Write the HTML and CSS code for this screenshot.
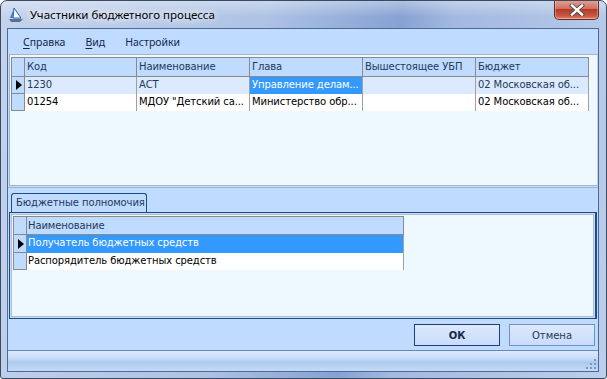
FILE: index.html
```html
<!DOCTYPE html>
<html lang="ru">
<head>
    <meta charset="UTF-8">
    <title>Участники бюджетного процесса</title>
    <link rel="stylesheet" href="styles.css">
</head>
<body>
    <div class="window">
        <div class="titlebar">
            <svg class="app-icon" width="16" height="16" viewBox="0 0 16 16">
                <path d="M6 1 L13 11 L5 11 Z" fill="#ffffff" stroke="#2a5fb0" stroke-width="1"/>
                <path d="M6 1 L5 11 L2 11 Z" fill="#3b7bd8"/>
                <path d="M1 12 L15 12 L12 15 L3 15 Z" fill="#5a6f8f"/>
            </svg>
            <span class="title">Участники бюджетного процесса</span>
            <div class="close-btn">
                <svg width="16" height="12" viewBox="0 0 16 12">
                    <path d="M3 1.5 L13 10.5 M13 1.5 L3 10.5" stroke="#4a4a4a" stroke-width="4.2" stroke-linecap="square"/>
                    <path d="M3 1.5 L13 10.5 M13 1.5 L3 10.5" stroke="#ffffff" stroke-width="2.4" stroke-linecap="square"/>
                </svg>
            </div>
        </div>

        <div class="client">
            <div class="menubar">
                <span class="menu-item"><u>С</u>правка</span>
                <span class="menu-item"><u>В</u>ид</span>
                <span class="menu-item">Настройки</span>
            </div>

            <!-- participants grid -->
            <div class="grid main-grid">
                <div class="row header">
                    <div class="cell ind"></div>
                    <div class="cell">Код</div>
                    <div class="cell">Наименование</div>
                    <div class="cell">Глава</div>
                    <div class="cell">Вышестоящее УБП</div>
                    <div class="cell">Бюджет</div>
                </div>
                <div class="row current">
                    <div class="cell ind"><span class="arrow"></span></div>
                    <div class="cell">1230</div>
                    <div class="cell">АСТ</div>
                    <div class="cell focused">Управление делам...</div>
                    <div class="cell"></div>
                    <div class="cell">02 Московская об...</div>
                </div>
                <div class="row">
                    <div class="cell ind"></div>
                    <div class="cell">01254</div>
                    <div class="cell">МДОУ "Детский са...</div>
                    <div class="cell">Министерство обр...</div>
                    <div class="cell"></div>
                    <div class="cell">02 Московская об...</div>
                </div>
            </div>

            <div class="splitter"></div>

            <div class="tabs">
                <div class="tab-strip">
                    <div class="tab">Бюджетные полномочия</div>
                </div>
                <div class="tab-panel">
                    <div class="panel-inner">
                        <div class="grid sub-grid">
                            <div class="row header">
                                <div class="cell ind"></div>
                                <div class="cell">Наименование</div>
                            </div>
                            <div class="row selected">
                                <div class="cell ind"><span class="arrow"></span></div>
                                <div class="cell">Получатель бюджетных средств</div>
                            </div>
                            <div class="row">
                                <div class="cell ind"></div>
                                <div class="cell">Распорядитель бюджетных средств</div>
                            </div>
                        </div>
                    </div>
                </div>
            </div>

            <div class="buttons">
                <button class="btn default">ОК</button>
                <button class="btn">Отмена</button>
            </div>

            <div class="statusbar">
                <svg class="grip" width="10" height="10" viewBox="0 0 10 10">
                    <rect x="8" y="0" width="2" height="2" fill="#7f97bd"/>
                    <rect x="4" y="4" width="2" height="2" fill="#7f97bd"/>
                    <rect x="8" y="4" width="2" height="2" fill="#7f97bd"/>
                    <rect x="0" y="8" width="2" height="2" fill="#7f97bd"/>
                    <rect x="4" y="8" width="2" height="2" fill="#7f97bd"/>
                    <rect x="8" y="8" width="2" height="2" fill="#7f97bd"/>
                </svg>
            </div>
        </div>
    </div>
</body>
</html>
```

FILE: styles.css
```css
* {
    margin: 0;
    padding: 0;
    box-sizing: border-box;
}

body {
    width: 607px;
    height: 379px;
    overflow: hidden;
    background: #ffffff;
    font-family: "DejaVu Sans", sans-serif;
    font-size: 10px;
}

.window {
    width: 607px;
    height: 379px;
    border: 1px solid #3a4a60;
    border-radius: 7px 7px 3px 3px;
    background: linear-gradient(100deg, #c4d3ec 0%, #adc2e4 40%, #86a2d3 60%, #a3b9e0 68%, #bccfeb 100%);
    display: flex;
    flex-direction: column;
    overflow: hidden;
}

/* title bar */
.titlebar {
    height: 27px;
    display: flex;
    align-items: center;
    position: relative;
    padding-left: 7px;
    background: linear-gradient(to bottom, rgba(255, 255, 255, 0.35), rgba(255, 255, 255, 0) 60%);
}

.app-icon {
    margin-right: 6px;
}

.title {
    font-family: "Noto Sans", sans-serif;
    font-size: 11.5px;
    color: #000000;
    text-shadow: 0 0 6px #ffffff, 0 0 10px #ffffff;
}

.close-btn {
    position: absolute;
    top: -1px;
    right: 7px;
    width: 45px;
    height: 20px;
    border: 1px solid #6b2a25;
    border-top: none;
    border-radius: 0 0 5px 5px;
    background: linear-gradient(to bottom, #e6a397 0%, #d0705f 45%, #b73a26 50%, #c75a45 85%, #e08c6f 100%);
    display: flex;
    align-items: center;
    justify-content: center;
    box-shadow: inset 0 0 0 1px rgba(255, 255, 255, 0.3);
}

/* client area */
.client {
    flex: 1;
    margin: 0 7px 6px 6px;
    border: 1px solid #4d6a96;
    background: #bfdbff;
    display: flex;
    flex-direction: column;
}

.menubar {
    height: 25px;
    display: flex;
    align-items: center;
    padding-left: 5px;
    font-family: "Noto Sans", sans-serif;
    font-size: 10.5px;
    color: #15284b;
}

.menu-item {
    padding: 0 10px;
}

.menu-item u {
    text-underline-offset: 2px;
}

/* grids */
.grid {
    background: #eef8ff;
}

.row {
    display: grid;
    height: 17px;
}

.main-grid {
    height: 132px;
    margin-left: 1px;
    border: 1px solid #a7b4c6;
    border-right-color: #c8d2de;
    padding: 2px 0 0 1px;
}

.main-grid .row {
    grid-template-columns: 14px 112px 113px 113px 113px 113px;
}

.cell {
    padding: 2px 0 0 2px;
    white-space: nowrap;
    overflow: hidden;
    letter-spacing: -0.1px;
    border-right: 1px solid #a0a0a0;
    color: #000000;
    background: #ffffff;
}

.row.header {
    height: 20px;
}

.row.header .cell {
    background: #bfdbff;
    color: #1e395b;
    border-top: 1px solid #8a8a8a;
    border-bottom: 1px solid #8a8a8a;
    border-right: 1px solid #8a8a8a;
    padding-top: 3px;
}

.row.header .cell:first-child {
    border-left: 1px solid #8a8a8a;
}

.cell.ind {
    background: #bfdbff;
    border-left: 1px solid #8a8a8a;
    border-right: 1px solid #8a8a8a;
    border-bottom: 1px solid #8a8a8a;
    padding: 0;
    display: flex;
    align-items: center;
    justify-content: center;
}

.arrow {
    width: 0;
    height: 0;
    border-top: 5px solid transparent;
    border-bottom: 5px solid transparent;
    border-left: 6px solid #000000;
    margin-left: 1px;
}

.row.current .cell {
    background: #dceaff;
    color: #1e395b;
}

.row.current .cell.ind {
    background: #bfdbff;
}

.row.current .cell.focused {
    background: #3399ff;
    color: #ffffff;
}

.splitter {
    height: 4px;
    background: linear-gradient(to bottom, transparent 1px, #9fb4d2 1px, #9fb4d2 2px, transparent 2px);
}

/* tabs */
.tabs {
    display: flex;
    flex-direction: column;
}

.tab-strip {
    height: 22px;
    display: flex;
    align-items: flex-end;
    padding-left: 3px;
}

.tab {
    height: 19px;
    width: 136px;
    border: 1px solid #1f4b8c;
    border-bottom: none;
    border-radius: 3px 3px 0 0;
    padding: 3px 0 0 4px;
    white-space: nowrap;
    letter-spacing: -0.1px;
    color: #1e395b;
    background: #bfdbff;
}

.tab-panel {
    height: 107px;
    margin: 0 1px 0 1px;
    border: 1px solid #1f4b8c;
    border-right-width: 2px;
    padding: 1px;
}

.panel-inner {
    height: 100%;
    border: 1px solid #b8bcc4;
    background: #eef8ff;
    padding: 1px;
}

.sub-grid {
    background: transparent;
}

.sub-grid .row {
    grid-template-columns: 14px 377px;
    height: 17px;
}

.sub-grid .row.header {
    height: 19px;
}

.sub-grid .row.selected {
    height: 18px;
}

.sub-grid .row.selected .cell {
    background: #3399ff;
    color: #ffffff;
}

.sub-grid .row.selected .cell.ind {
    background: #bfdbff;
}

.sub-grid .cell {
    padding-left: 1px;
}

/* dialog buttons */
.buttons {
    height: 31px;
    display: flex;
    justify-content: flex-end;
    align-items: flex-start;
    gap: 9px;
    padding: 5px 3px 0 0;
}

.btn {
    width: 86px;
    height: 22px;
    border: 1px solid #6f90c6;
    background: linear-gradient(to bottom, #dce9fc, #c8dcfa);
    font-family: "DejaVu Sans", sans-serif;
    font-size: 10px;
    color: #1e395b;
}

.btn.default {
    border-color: #1f3f76;
    font-weight: bold;
    color: #15284b;
}

.statusbar {
    flex: 1;
    border-top: 1px solid #6787bb;
    background: linear-gradient(to bottom, #dde9fb 0%, #c6dbf8 40%, #adc8ee 55%, #c5daf8 100%);
    display: flex;
    justify-content: flex-end;
    align-items: flex-end;
    padding: 0 2px 2px 0;
}
```
